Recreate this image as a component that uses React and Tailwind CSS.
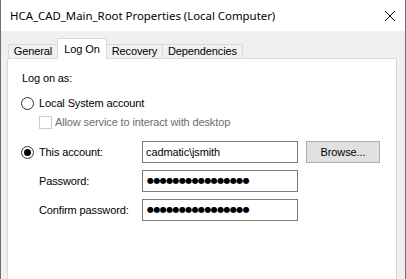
import React from "react";

const font = { fontFamily: '"Liberation Sans", Arial, sans-serif' };

function Radio({ checked }) {
  return (
    <span className="w-[13px] h-[13px] rounded-full border border-[#333333] bg-white flex items-center justify-center shrink-0">
      {checked && <span className="w-[7px] h-[7px] rounded-full bg-[#000000]" />}
    </span>
  );
}

function Field({ children }) {
  return (
    <div className="w-[156px] h-[22px] border border-[#7a7a7a] bg-white flex items-center pl-[3px] shrink-0">
      {children}
    </div>
  );
}

function Dots() {
  return (
    <span className="text-[8px] leading-none tracking-[-0.6px] text-black pl-[1px]" style={{ fontFamily: '"DejaVu Sans", sans-serif' }}>
      ●●●●●●●●●●●●●●●●
    </span>
  );
}

export default function App() {
  return (
    <div
      className="w-[406px] h-[279px] bg-[#f0f0f0] border-x border-[#6f6f6f] flex flex-col overflow-hidden text-[11px] tracking-[-0.12px] text-black whitespace-nowrap"
      style={font}
    >
      <div className="h-[31px] bg-white flex items-center justify-between shrink-0">
        <span className="pl-[9px] leading-none text-[11.4px] tracking-normal" style={{ fontFamily: '"Noto Sans", sans-serif' }}>
          HCA_CAD_Main_Root Properties (Local Computer)
        </span>
        <svg width="12" height="12" viewBox="0 0 12 12" className="mr-[9px]">
          <path d="M1 1 L11 11 M11 1 L1 11" stroke="#000" strokeWidth="1" fill="none" />
        </svg>
      </div>
      <div className="flex-1 flex flex-col pt-[7px] pl-[6px] pr-[8px]">
        <div className="flex items-end h-[21px] pl-[1px] relative z-10 -mb-px">
          <div className="w-[50px] h-[14px] mb-px border border-b-0 border-[#d9d9d9] bg-[#f0f0f0] flex items-center justify-center leading-none">General</div>
          <div className="w-[50px] h-[21px] -ml-px border border-b-0 border-[#d9d9d9] bg-white flex items-center justify-center leading-none relative z-10">Log On</div>
          <div className="w-[57px] h-[14px] mb-px -ml-px border border-b-0 border-[#d9d9d9] bg-[#f0f0f0] flex items-center justify-center leading-none">Recovery</div>
          <div className="w-[81px] h-[14px] mb-px -ml-px border border-b-0 border-[#d9d9d9] bg-[#f0f0f0] flex items-center justify-center leading-none">Dependencies</div>
        </div>
        <div className="flex-1 bg-white border border-b-0 border-[#d9d9d9] pl-[13px] flex flex-col">
          <div className="mt-[11px] h-[16px] flex items-center ml-[1px]">Log on as:</div>
          <div className="mt-[9px] h-[16px] flex items-center gap-[5px]">
            <Radio />
            <span>Local System account</span>
          </div>
          <div className="mt-[3px] h-[16px] flex items-center gap-[3px] pl-[18px]">
            <span className="w-[13px] h-[13px] border border-[#cccccc] bg-white shrink-0" />
            <span className="text-[#6d6d6d]">Allow service to interact with desktop</span>
          </div>
          <div className="mt-[11px] h-[22px] flex items-center">
            <div className="w-[121px] flex items-center gap-[5px]">
              <Radio checked />
              <span>This account:</span>
            </div>
            <Field>
              <span className="leading-none">cadmatic\jsmith</span>
            </Field>
            <button className="ml-[8px] w-[74px] h-[22px] bg-[#e1e1e1] border border-[#adadad] flex items-center justify-center leading-none">
              Browse...
            </button>
          </div>
          <div className="mt-[7px] h-[22px] flex items-center">
            <span className="w-[121px] pl-[18px]">Password:</span>
            <Field><Dots /></Field>
          </div>
          <div className="mt-[7px] h-[22px] flex items-center">
            <span className="w-[121px] pl-[18px]">Confirm password:</span>
            <Field><Dots /></Field>
          </div>
        </div>
      </div>
    </div>
  );
}
